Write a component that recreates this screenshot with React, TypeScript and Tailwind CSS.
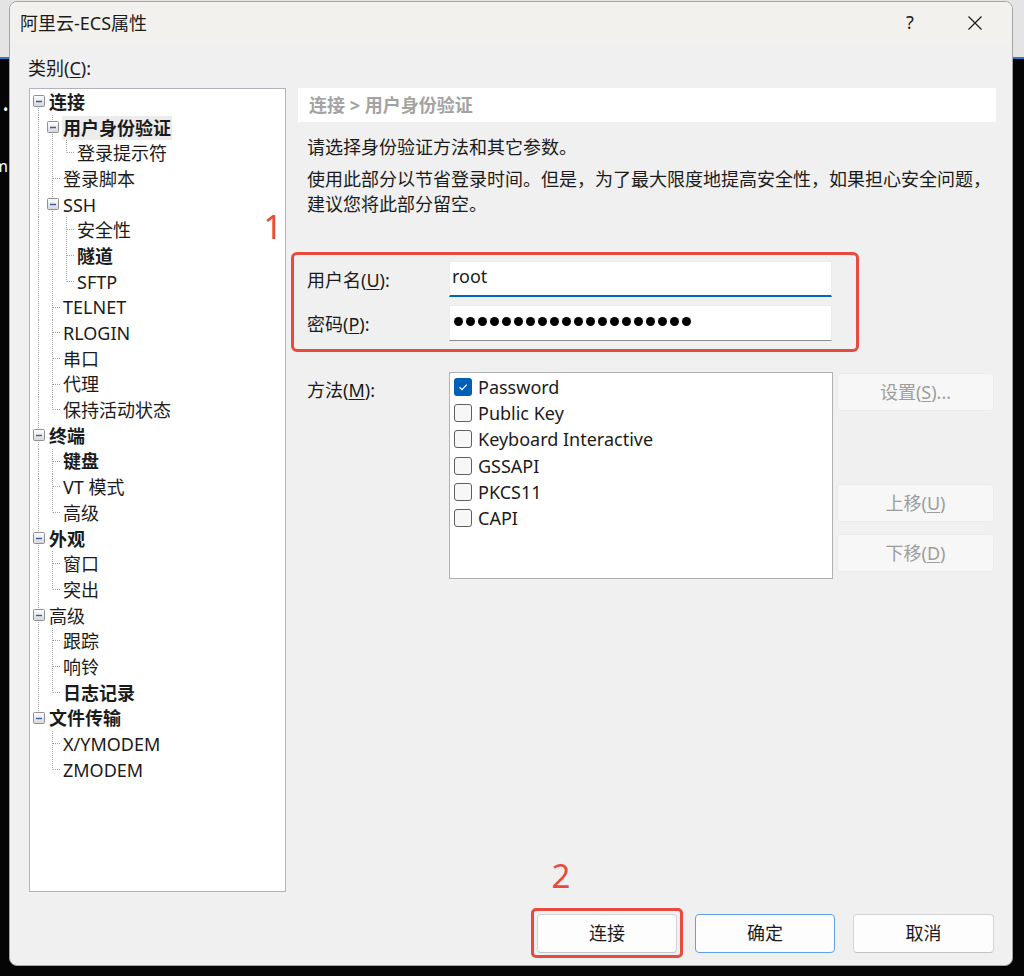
import React, { useId } from "react";

type CellType = "none" | "vert" | "tee" | "elbow" | "boxTB" | "boxT" | "boxB";

const DOT = "#a3a3a3";

function Cell({ type }: { type: CellType }) {
  const gid = useId().replace(/:/g, "");
  const isBox = type === "boxTB" || type === "boxT" || type === "boxB";
  return (
    <svg className="h-full w-[14px] shrink-0" width="14" height="100%">
      {(type === "vert" || type === "tee") && (
        <line x1="6.5" y1="0" x2="6.5" y2="100%" stroke={DOT} strokeWidth="1" strokeDasharray="1 1" />
      )}
      {type === "elbow" && (
        <line x1="6.5" y1="0" x2="6.5" y2="12.5" stroke={DOT} strokeWidth="1" strokeDasharray="1 1" />
      )}
      {(type === "tee" || type === "elbow") && (
        <line x1="7" y1="12.5" x2="14" y2="12.5" stroke={DOT} strokeWidth="1" strokeDasharray="1 1" />
      )}
      {(type === "boxTB" || type === "boxT") && (
        <line x1="6.5" y1="0" x2="6.5" y2="6" stroke={DOT} strokeWidth="1" strokeDasharray="1 1" />
      )}
      {(type === "boxTB" || type === "boxB") && (
        <line x1="6.5" y1="19" x2="6.5" y2="100%" stroke={DOT} strokeWidth="1" strokeDasharray="1 1" />
      )}
      {isBox && (
        <>
          <defs>
            <linearGradient id={gid} x1="0" y1="0" x2="0" y2="1">
              <stop offset="0" stopColor="#ffffff" />
              <stop offset="1" stopColor="#d6d6d6" />
            </linearGradient>
          </defs>
          <rect x="1.5" y="6.5" width="11" height="11" rx="1" fill={`url(#${gid})`} stroke="#8f8f96" strokeWidth="1" />
          <line x1="4" y1="12.5" x2="10" y2="12.5" stroke="#3a5ba8" strokeWidth="1.4" />
        </>
      )}
    </svg>
  );
}

type Row = { text: string; cells: CellType[]; bold?: boolean; hl?: boolean };

const rows: Row[] = [
  { text: "连接", cells: ["boxB"], bold: true },
  { text: "用户身份验证", cells: ["vert", "boxTB"], bold: true, hl: true },
  { text: "登录提示符", cells: ["vert", "vert", "elbow"] },
  { text: "登录脚本", cells: ["vert", "tee"] },
  { text: "SSH", cells: ["vert", "boxTB"] },
  { text: "安全性", cells: ["vert", "vert", "tee"] },
  { text: "隧道", cells: ["vert", "vert", "tee"], bold: true },
  { text: "SFTP", cells: ["vert", "vert", "elbow"] },
  { text: "TELNET", cells: ["vert", "tee"] },
  { text: "RLOGIN", cells: ["vert", "tee"] },
  { text: "串口", cells: ["vert", "tee"] },
  { text: "代理", cells: ["vert", "tee"] },
  { text: "保持活动状态", cells: ["vert", "elbow"] },
  { text: "终端", cells: ["boxTB"], bold: true },
  { text: "键盘", cells: ["vert", "tee"], bold: true },
  { text: "VT 模式", cells: ["vert", "tee"] },
  { text: "高级", cells: ["vert", "elbow"] },
  { text: "外观", cells: ["boxTB"], bold: true },
  { text: "窗口", cells: ["vert", "tee"] },
  { text: "突出", cells: ["vert", "elbow"] },
  { text: "高级", cells: ["boxTB"] },
  { text: "跟踪", cells: ["vert", "tee"] },
  { text: "响铃", cells: ["vert", "tee"] },
  { text: "日志记录", cells: ["vert", "elbow"], bold: true },
  { text: "文件传输", cells: ["boxT"], bold: true },
  { text: "X/YMODEM", cells: ["none", "tee"] },
  { text: "ZMODEM", cells: ["none", "elbow"] },
];

function Check({ checked }: { checked?: boolean }) {
  return checked ? (
    <span className="w-[18px] h-[18px] rounded-[3px] bg-[#005fb8] flex items-center justify-center shrink-0">
      <svg width="12" height="12" viewBox="0 0 12 12">
        <path d="M2.5 6.2 L5 8.6 L9.8 3.6" fill="none" stroke="#ffffff" strokeWidth="1.2" />
      </svg>
    </span>
  ) : (
    <span className="w-[18px] h-[18px] rounded-[3px] border border-[#5f5f5f] bg-[#f7f7f7] shrink-0" />
  );
}

const methods = [
  { t: "Password", c: true },
  { t: "Public Key" },
  { t: "Keyboard Interactive" },
  { t: "GSSAPI" },
  { t: "PKCS11" },
  { t: "CAPI" },
];

function SideBtn({ children, className = "" }: { children: React.ReactNode; className?: string }) {
  return (
    <div
      className={`h-[38px] w-[157px] rounded-[4px] bg-[#f7f7f7] border border-[#ebebeb] flex items-center justify-center text-[18px] text-[#9d9d9d] ${className}`}
    >
      {children}
    </div>
  );
}

function BottomBtn({ children, primary = false, w = "w-[140px]" }: { children: React.ReactNode; primary?: boolean; w?: string }) {
  return (
    <div
      className={`${w} h-[39px] rounded-[4px] bg-[#fdfdfd] border ${
        primary ? "border-[#5ea2e4]" : "border-[#d4d4d4] border-b-[#c4c4c4]"
      } flex items-center justify-center text-[18px] text-[#1b1b1b]`}
    >
      {children}
    </div>
  );
}

export default function App() {
  return (
    <div className="w-[1024px] h-[976px] overflow-hidden flex items-start bg-[linear-gradient(to_bottom,#e4e4e4_0px,#e4e4e4_57px,#2a78c8_57px,#2a78c8_59px,#050505_59px)] font-['Noto_Sans','Noto_Sans_CJK_SC',sans-serif] text-[#1b1b1b]">
      {/* desktop strip visible left of the dialog */}
      <div className="w-[9px] shrink-0 overflow-hidden flex flex-col pt-[98px] text-white text-[14px] leading-[24px]">
        <span className="ml-[3px]">•</span>
        <span className="-ml-[7px] mt-[32px] text-[16px]">m</span>
      </div>
      <div className="relative mt-px w-[1004px] h-[965px] flex flex-col rounded-[8px] border border-[#a5a5a5] bg-[#f0f0f0] overflow-hidden">
        {/* Title bar */}
        <div className="h-[41px] shrink-0 bg-[#f3f1ee] flex items-center pl-[10px]">
          <span className="text-[18px] leading-[24px]">阿里云-ECS属性</span>
          <div className="ml-auto flex items-center h-full mr-[14px] gap-[19px]">
            <div className="w-[46px] h-full flex items-center justify-center text-[18px] text-[#1b1b1b]">?</div>
            <div className="w-[46px] h-full flex items-center justify-center">
              <svg width="16" height="16" viewBox="0 0 16 16">
                <path d="M1.5 1.5 L14.5 14.5 M14.5 1.5 L1.5 14.5" stroke="#1b1b1b" strokeWidth="1.2" fill="none" />
              </svg>
            </div>
          </div>
        </div>

        {/* Body */}
        <div className="flex-1 flex flex-col pt-[13px] pl-[19px]">
          <div className="text-[18px] leading-[24px] -ml-px mb-[8px]">
            类别(<span className="underline underline-offset-2">C</span>):
          </div>
          <div className="flex gap-[12px] h-[804px]">
            {/* Tree */}
            <div className="w-[257px] h-[804px] bg-white border border-[#b2b2ba] pl-[2px] overflow-hidden">
              {rows.map((r, i) => (
                <div key={i} className="flex h-[25.7px] items-stretch">
                  {r.cells.map((c, j) => (
                    <Cell key={j} type={c} />
                  ))}
                  <div className="flex items-center ml-[3px]">
                    <span
                      className={`text-[18px] leading-[24px] whitespace-nowrap ${r.bold ? "font-bold" : ""} ${
                        r.hl ? "bg-[#ececec] px-px -ml-px" : ""
                      }`}
                    >
                      {r.text}
                    </span>
                  </div>
                </div>
              ))}
            </div>

            {/* Right pane */}
            <div className="w-[698px] flex flex-col">
              <div className="h-[34px] bg-white flex items-center pl-[11px] text-[18px] font-bold text-[#a3a3a3]">
                连接 &gt; 用户身份验证
              </div>
              <div className="mt-[13px] pl-[9px] text-[18px] leading-[25px] whitespace-nowrap">请选择身份验证方法和其它参数。</div>
              <div className="mt-[7px] pl-[9px] text-[18px] leading-[25px] whitespace-nowrap">
                使用此部分以节省登录时间。但是，为了最大限度地提高安全性，如果担心安全问题，
                <br />
                建议您将此部分留空。
              </div>

              {/* Credentials */}
              <div className="mt-[44px] flex items-center h-[36px]">
                <div className="w-[151px] pl-[9px] text-[18px] leading-[25px] pt-[2px]">
                  用户名(<span className="underline underline-offset-2">U</span>):
                </div>
                <div className="w-[383px] h-[36px] bg-white border border-[#ececec] border-b-2 border-b-[#0067c0] flex items-center pl-[2px] pb-[6px]">
                  <span className="text-[18px] leading-[24px]">root</span>
                </div>
              </div>
              <div className="mt-[8px] flex items-center h-[36px]">
                <div className="w-[151px] pl-[9px] text-[18px] leading-[25px] pt-[2px]">
                  密码(<span className="underline underline-offset-2">P</span>):
                </div>
                <div className="w-[383px] h-[36px] bg-white border border-[#ececec] border-b-[#8d8d8d] flex items-center pl-[4px] pb-[3px] gap-[3px]">
                  {Array.from({ length: 20 }).map((_, i) => (
                    <span key={i} className="w-[9px] h-[9px] rounded-full bg-black" />
                  ))}
                </div>
              </div>

              {/* Methods */}
              <div className="mt-[31px] flex items-start">
                <div className="w-[151px] pl-[9px] pt-[6px] text-[18px] leading-[25px]">
                  方法(<span className="underline underline-offset-2">M</span>):
                </div>
                <div className="w-[384px] h-[207px] bg-white border border-[#b1b1b1] pt-[1px] pl-[4px]">
                  {methods.map((m) => (
                    <div key={m.t} className="flex items-center h-[26.2px] gap-[6px]">
                      <Check checked={m.c} />
                      <span className="text-[18px] leading-[24px] whitespace-nowrap">{m.t}</span>
                    </div>
                  ))}
                </div>
                <div className="ml-[4px] flex flex-col">
                  <SideBtn className="mt-[1px]">
                    设置(<span className="underline underline-offset-2">S</span>)...
                  </SideBtn>
                  <SideBtn className="mt-[73px]">
                    上移(<span className="underline underline-offset-2">U</span>)
                  </SideBtn>
                  <SideBtn className="mt-[12px]">
                    下移(<span className="underline underline-offset-2">D</span>)
                  </SideBtn>
                </div>
              </div>
            </div>
          </div>

          {/* Bottom buttons */}
          <div className="mt-[22px] flex justify-end gap-[18px] pr-[18px]">
            <BottomBtn>连接</BottomBtn>
            <BottomBtn primary>确定</BottomBtn>
            <BottomBtn w="w-[141px]">取消</BottomBtn>
          </div>
        </div>

        {/* Annotations */}
        <div className="absolute left-[248px] top-[207px] w-[30px] text-center text-[33px] leading-[36px] text-[#e84a3f]">1</div>
        <div className="absolute left-[281px] top-[250px] w-[568px] h-[100px] border-[3px] border-[#e84a3f] rounded-[6px]" />
        <div className="absolute left-[536px] top-[856px] w-[30px] text-center text-[33px] leading-[36px] text-[#e84a3f]">2</div>
        <div className="absolute left-[521px] top-[906px] w-[152px] h-[50px] border-[3px] border-[#e84a3f] rounded-[5px]" />
      </div>
    </div>
  );
}
